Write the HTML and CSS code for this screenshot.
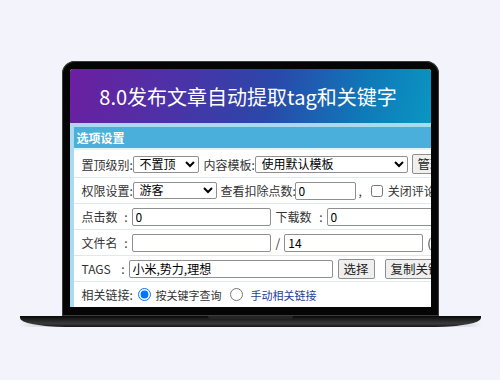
FILE: index.html
```html
<!DOCTYPE html>
<html lang="zh-CN">
<head>
    <meta charset="UTF-8">
    <meta name="viewport" content="width=device-width, initial-scale=1.0">
    <title>8.0发布文章自动提取tag和关键字</title>
    <link rel="stylesheet" href="styles.css">
</head>
<body>
    <div class="stage">
        <div class="lid">
            <div class="screen">
                <div class="banner">8.0发布文章自动提取tag和关键字</div>
                <div class="panel">
                    <div class="panel-title">选项设置</div>
                    <div class="panel-body">
                        <div class="row row-top">
                            <span class="lbl">置顶级别:</span>
                            <select class="sel w-top"><option>不置顶</option></select>
                            <span class="lbl ml5">内容模板:</span>
                            <select class="sel w-tpl"><option>使用默认模板</option></select>
                            <button class="btn ml4">管理模板</button>
                        </div>
                        <div class="row">
                            <span class="lbl">权限设置:</span>
                            <select class="sel w-perm"><option>游客</option></select>
                            <span class="txt ml4 w-deduct">查看扣除点数:</span>
                            <input class="inp w-small" type="text" value="0">
                            <span class="txt ml3">,</span>
                            <input class="chk" type="checkbox">
                            <span class="txt ml5">关闭评论</span>
                        </div>
                        <div class="row">
                            <span class="lbl lbl-c"><span>点击数</span><span>:</span></span>
                            <input class="inp w-mid" type="text" value="0">
                            <span class="lbl lbl-c ml5 w-dl"><span>下载数</span><span>:</span></span>
                            <input class="inp w-wide" type="text" value="0">
                        </div>
                        <div class="row">
                            <span class="lbl lbl-c"><span>文件名</span><span>:</span></span>
                            <input class="inp w-mid" type="text" value="">
                            <span class="txt ml5">/</span>
                            <input class="inp w-mid ml4" type="text" value="14">
                            <span class="txt ml4">(</span>
                        </div>
                        <div class="row">
                            <span class="lbl lbl-c w-tags"><span>TAGS</span><span>:</span></span>
                            <input class="inp w-tag" type="text" value="小米,势力,理想">
                            <button class="btn ml5 w-pick">选择</button>
                            <button class="btn ml10">复制关键字</button>
                        </div>
                        <div class="row row-last">
                            <span class="lbl">相关链接:</span>
                            <input class="rad" type="radio" name="rel" checked>
                            <span class="opt">按关键字查询</span>
                            <input class="rad ml8" type="radio" name="rel">
                            <span class="opt link">手动相关链接</span>
                        </div>
                    </div>
                </div>
            </div>
        </div>
        <div class="base">
            <div class="notch"></div>
        </div>
    </div>
</body>
</html>
```

FILE: styles.css
```css
body {
    margin: 0;
    background-color: #f3f3fb;
    font-family: "Noto Sans CJK SC", sans-serif;
}

.stage {
    display: flex;
    flex-direction: column;
    align-items: center;
    padding-top: 61px;
}

/* laptop */
.lid {
    width: 377px;
    height: 255px;
    box-sizing: border-box;
    padding: 8px 8px 9px 8px;
    background-color: #050505;
    border-radius: 13px 13px 0 0;
    box-shadow: inset 0 0 0 1px #3c3c3c;
}

.screen {
    height: 100%;
    background-color: #fff;
    border-radius: 3px 3px 0 0;
    overflow: hidden;
}

.base {
    position: relative;
    width: 461px;
    height: 11px;
    background: linear-gradient(#080808, #2e2e2e 50%, #3a3a3a 70%, #161616);
    border-radius: 0 0 45px 45px / 0 0 9px 9px;
    box-shadow: 0 5px 6px -2px rgba(0, 0, 0, 0.15);
}

.notch {
    position: absolute;
    left: 188px;
    top: 0;
    width: 85px;
    height: 3px;
    background-color: #262626;
    border-radius: 0 0 3px 3px;
}

/* banner */
.banner {
    height: 54px;
    display: flex;
    align-items: center;
    justify-content: center;
    padding-right: 4px;
    color: #fff;
    font-size: 20px;
    background: linear-gradient(105deg, #6c1fa0 0%, #4b32a7 30%, #2b47aa 55%, #0f78b8 80%, #0a96c2 100%);
}

/* option panel */
.panel {
    background-color: #a9daf1;
    padding: 4px 0 0 4px;
    height: 100%;
}

.panel-title {
    height: 21px;
    line-height: 21px;
    padding-left: 3px;
    background-color: #4aafdb;
    color: #fff;
    font-size: 12px;
    font-weight: bold;
}

.panel-body {
    background-color: #fff;
    border-top: 2px solid #e3f1f9;
    height: 100%;
}

.row {
    display: flex;
    align-items: center;
    height: 25px;
    padding-left: 8px;
    border-bottom: 1px solid #dce9f2;
    white-space: nowrap;
    font-size: 12px;
    color: #333;
}

.row > * {
    flex-shrink: 0;
}

.row-top {
    box-sizing: border-box;
    height: 28px;
    padding-top: 1px;
}

.row-last {
    border-bottom: none;
}

.lbl {
    width: 51px;
}

.lbl-c {
    display: flex;
    justify-content: space-between;
    width: 46px;
    padding-right: 4px;
}

.w-dl {
    width: 47px;
}

.w-tags {
    width: 43px;
}

.txt {
    color: #333;
}

.w-deduct {
    width: 74px;
}

/* controls */
.sel {
    height: 17px;
    box-sizing: border-box;
    margin: 0;
    border: 1px solid #8f8f8f;
    border-radius: 2px;
    padding: 0 0 0 2px;
    background-color: #fff;
    font-family: "Liberation Sans", "Noto Sans CJK SC", sans-serif;
    font-size: 12px;
    line-height: 14px;
    color: #000;
}

.inp {
    height: 18px;
    box-sizing: border-box;
    margin: 0;
    border: 1px solid #8f8f8f;
    border-radius: 2px;
    padding: 0 3px;
    font-family: "Noto Sans CJK SC", sans-serif;
    font-size: 12px;
    color: #000;
}

.btn {
    height: 20px;
    box-sizing: border-box;
    padding: 0 5px;
    border: 1px solid #8f8f8f;
    border-radius: 2px;
    background-color: #efefef;
    font-family: "Noto Sans CJK SC", sans-serif;
    font-size: 12.5px;
    line-height: 16px;
    color: #222;
}

.chk {
    width: 12px;
    height: 12px;
    margin: 0 0 0 9px;
}

.rad {
    width: 13px;
    height: 13px;
    margin: 0 0 0 5px;
}

.opt {
    margin-left: 5px;
    font-size: 11px;
}

.link {
    color: #1d3f96;
    margin-left: 8px;
}

.w-top { width: 66px; }
.w-tpl { width: 153px; }
.w-perm { width: 84px; }
.w-small { width: 61px; }
.w-mid { width: 139px; }
.w-wide { width: 150px; }
.w-tag { width: 204px; }
.w-pick { width: 37px; }

.ml3 { margin-left: 3px; }
.ml4 { margin-left: 4px; }
.ml5 { margin-left: 5px; }
.ml8 { margin-left: 8px; }
.ml10 { margin-left: 10px; }
```
